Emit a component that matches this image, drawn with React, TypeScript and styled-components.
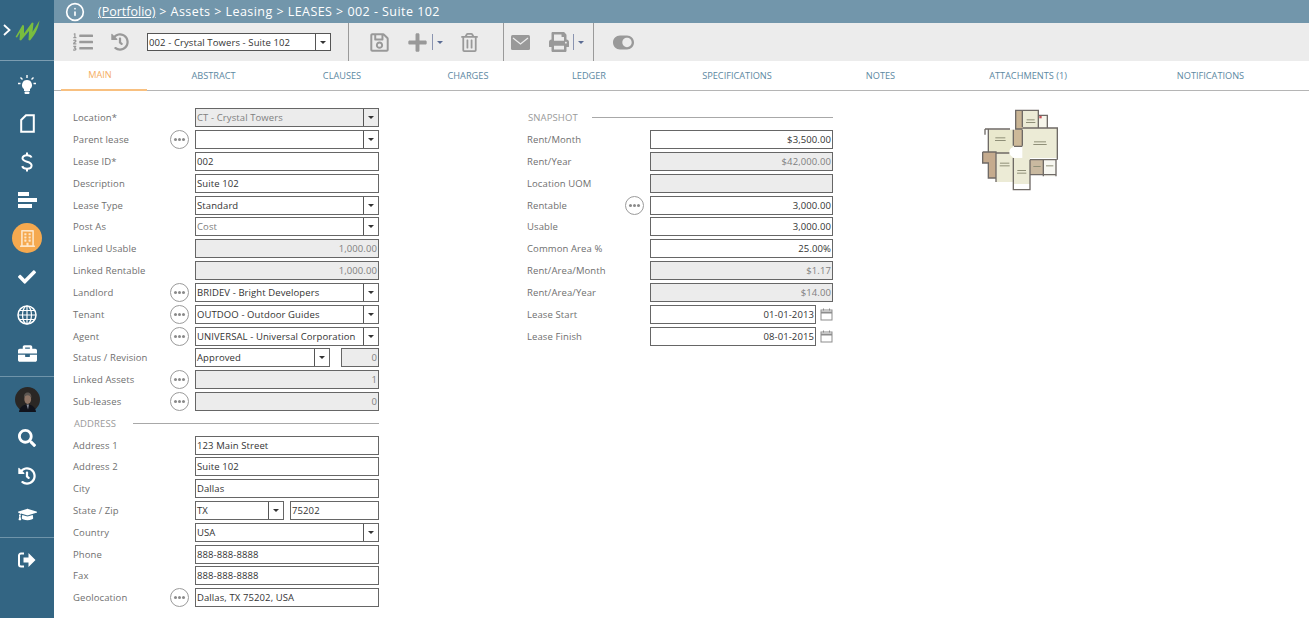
import styled, { createGlobalStyle } from 'styled-components';
import {
  FaBriefcase,
  FaCheck,
  FaGraduationCap,
  FaHistory,
  FaListOl,
  FaPlus,
  FaPrint,
  FaRegBuilding,
  FaRegSave,
  FaRegTrashAlt,
  FaSearch,
  FaToggleOn,
} from 'react-icons/fa';
import { FiInfo } from 'react-icons/fi';

const GlobalStyle = createGlobalStyle`
  html, body {
    margin: 0;
    padding: 0;
    background: #fff;
  }
  body {
    font-family: "Open Sans", "Liberation Sans", sans-serif;
    font-size: 9.5px;
    letter-spacing: 0.1px;
    overflow: hidden;
  }
`;

type FieldKind = 'text' | 'number' | 'select';

interface Field {
  label: string;
  value?: string;
  kind?: FieldKind;
  disabled?: boolean;
  muted?: boolean;
  more?: boolean;
}

const leftFields: Field[] = [
  { label: 'Location*', value: 'CT - Crystal Towers', kind: 'select', disabled: true },
  { label: 'Parent lease', value: '', kind: 'select', more: true },
  { label: 'Lease ID*', value: '002' },
  { label: 'Description', value: 'Suite 102' },
  { label: 'Lease Type', value: 'Standard', kind: 'select' },
  { label: 'Post As', value: 'Cost', kind: 'select', muted: true },
  { label: 'Linked Usable', value: '1,000.00', kind: 'number', disabled: true },
  { label: 'Linked Rentable', value: '1,000.00', kind: 'number', disabled: true },
  { label: 'Landlord', value: 'BRIDEV - Bright Developers', kind: 'select', more: true },
  { label: 'Tenant', value: 'OUTDOO - Outdoor Guides', kind: 'select', more: true },
  { label: 'Agent', value: 'UNIVERSAL - Universal Corporation', kind: 'select', more: true },
];

const assetFields: Field[] = [
  { label: 'Linked Assets', value: '1', kind: 'number', disabled: true, more: true },
  { label: 'Sub-leases', value: '0', kind: 'number', disabled: true, more: true },
];

const addressFields: Field[] = [
  { label: 'Address 1', value: '123 Main Street' },
  { label: 'Address 2', value: 'Suite 102' },
  { label: 'City', value: 'Dallas' },
];

const contactFields: Field[] = [
  { label: 'Country', value: 'USA', kind: 'select' },
  { label: 'Phone', value: '888-888-8888' },
  { label: 'Fax', value: '888-888-8888' },
  { label: 'Geolocation', value: 'Dallas, TX 75202, USA', more: true },
];

const snapshotFields: Field[] = [
  { label: 'Rent/Month', value: '$3,500.00', kind: 'number' },
  { label: 'Rent/Year', value: '$42,000.00', kind: 'number', disabled: true },
  { label: 'Location UOM', value: '', kind: 'number', disabled: true },
  { label: 'Rentable', value: '3,000.00', kind: 'number', more: true },
  { label: 'Usable', value: '3,000.00', kind: 'number' },
  { label: 'Common Area %', value: '25.00%', kind: 'number' },
  { label: 'Rent/Area/Month', value: '$1.17', kind: 'number', disabled: true },
  { label: 'Rent/Area/Year', value: '$14.00', kind: 'number', disabled: true },
];

const tabs = [
  { label: 'MAIN', width: 86 },
  { label: 'ABSTRACT', width: 133 },
  { label: 'CLAUSES', width: 124 },
  { label: 'CHARGES', width: 128 },
  { label: 'LEDGER', width: 114 },
  { label: 'SPECIFICATIONS', width: 182 },
  { label: 'NOTES', width: 105 },
  { label: 'ATTACHMENTS (1)', width: 190 },
  { label: 'NOTIFICATIONS', width: 175 },
];

const BrandChevron = () => (
  <svg width="8" height="12" viewBox="0 0 8 12" fill="none">
    <path d="M1 1l5.500 5L1 11" stroke="#fff" strokeWidth="1.800" />
  </svg>
);

const Logo = () => (
  <svg width="25" height="21" viewBox="0 0 25 21">
    <path
      d="M0.500 17 L7.500 5 L9 5.500 L9 13.500 L17 2.500 L18.500 3 L17.500 12 L24.500 0.500 C23.500 8 20 15 15 20.500 L13.500 20 L14 11 L6 20.500 L4.500 20 L5 12.500 L2 17.500 Z"
      fill="#79bd3f"
    />
  </svg>
);

const BulbIcon = () => (
  <svg width="20" height="20" viewBox="0 0 20 20" fill="#fff">
    <path d="M10 5a5 5 0 0 1 3 9v2H7v-2a5 5 0 0 1 3-9z" />
    <rect x="7.500" y="16.500" width="5" height="2.500" rx="1" />
    <path d="M10 0v3M3.500 2.500l2 2M16.500 2.500l-2 2M1 8.500h2.500M19 8.500h-2.500" stroke="#fff" strokeWidth="1.400" />
  </svg>
);

const FileIcon = () => (
  <svg width="15" height="19" viewBox="0 0 15 19" fill="none">
    <path d="M6 1.200h7.800v16.600H1.200V6z" stroke="#fff" strokeWidth="2" />
  </svg>
);

const DollarIcon = () => (
  <svg width="12" height="20" viewBox="0 0 12 20" fill="none" stroke="#fff" strokeWidth="2">
    <path d="M10.500 5.500C10 4 8.500 3.200 6 3.200 3.200 3.200 1.500 4.500 1.500 6.300 1.500 8.300 3.300 9 6 9.800c2.800.8 4.600 1.600 4.600 3.700 0 1.900-1.800 3.200-4.600 3.200-2.500 0-4.200-.9-4.800-2.600" />
    <path d="M6 0.500v2.700M6 16.800v2.700" />
  </svg>
);

const BarsIcon = () => (
  <svg width="19" height="16" viewBox="0 0 19 16" fill="#fff">
    <rect x="0" y="0" width="11" height="4" />
    <rect x="0" y="6" width="19" height="4" />
    <rect x="0" y="12" width="14" height="4" />
  </svg>
);

const GlobeIcon = () => (
  <svg width="20" height="20" viewBox="0 0 20 20" fill="none" stroke="#fff" strokeWidth="1.200">
    <circle cx="10" cy="10" r="9" strokeWidth="1.500" />
    <ellipse cx="10" cy="10" rx="4.500" ry="9" />
    <path d="M10 1v18M1 10h18M2.500 5.500h15M2.500 14.500h15" />
  </svg>
);

const ExitIcon = () => (
  <svg width="18" height="16" viewBox="0 0 18 16">
    <path d="M6 1.500H3a2 2 0 0 0-2 2v9a2 2 0 0 0 2 2h3" stroke="#fff" strokeWidth="2" fill="none" />
    <path d="M5.500 5.500h5V1l7 7-7 7v-4.500h-5z" fill="#fff" />
  </svg>
);

const EnvelopeIcon = () => (
  <svg width="19" height="15" viewBox="0 0 19 15">
    <rect width="19" height="15" rx="1.500" fill="#999" />
    <path d="M2 3l7.500 6L17 3" fill="none" stroke="#ececec" strokeWidth="1.300" />
  </svg>
);

const AvatarArt = () => (
  <svg width="25" height="25" viewBox="0 0 25 25">
    <circle cx="12.500" cy="12.500" r="12.500" fill="#2a2725" />
    <path d="M4 25c.5-5 4-7.500 8.500-7.500S20.500 20 21 25z" fill="#11131c" />
    <path d="M11.500 17.500h2.500l-1 5z" fill="#8a8f9c" />
    <ellipse cx="12.700" cy="12" rx="3.400" ry="5" fill="#8f7566" />
    <path d="M9 11c-.3-4 1.500-5.500 3.700-5.500S16.700 7 16.400 11c-.7-2-1.900-2.800-3.700-2.800S9.700 9 9 11z" fill="#5c5652" />
  </svg>
);

// coordinates follow the plan drawing, walls are drawn over the room fills
const FloorPlan = () => (
  <svg width="80" height="84" viewBox="60 40 240 252">
    <rect x="187" y="47" width="48" height="55" fill="#ecebd6" />
    <rect x="235" y="62" width="27" height="40" fill="#f6f5ea" />
    <rect x="167" y="47" width="20" height="58" fill="#c9b494" />
    <rect x="85" y="105" width="75" height="70" fill="#e9e8cd" />
    <rect x="162" y="105" width="25" height="50" fill="#cdb999" />
    <rect x="187" y="100" width="105" height="90" fill="#ecebd6" />
    <rect x="68" y="172" width="40" height="33" fill="#c5ab8e" />
    <rect x="85" y="205" width="23" height="45" fill="#c5ab8e" />
    <rect x="108" y="175" width="52" height="87" fill="#ecebd6" />
    <rect x="160" y="190" width="50" height="78" fill="#ecebd6" />
    <rect x="210" y="195" width="40" height="45" fill="#c9b9a0" />
    <rect x="250" y="195" width="38" height="50" fill="#f7f7f1" />
    <circle cx="164" cy="172" r="16" fill="#fff" />
    <rect x="238" y="64" width="7" height="7" fill="#c9505a" />
    <path
      d="M167 105V47h68v15h27v38M187 47v50M235 62v38M75 103h75M168 103h19M187 100h105v95M75 103v17M85 105v67M68 172h40v90M68 172v33h17v45h23M160 105v48M187 105v48M162 155h25M108 175h40M160 190v95h50v-90M210 195h78v50M250 195v50M210 240h78"
      fill="none"
      stroke="#6f6a66"
      strokeWidth="4"
    />
    <g fill="#8f8f78">
      <rect x="200" y="74" width="24" height="3" />
      <rect x="198" y="82" width="28" height="3" />
      <rect x="106" y="128" width="30" height="3" />
      <rect x="105" y="136" width="32" height="3" />
      <rect x="222" y="140" width="36" height="3" />
      <rect x="220" y="148" width="40" height="3" />
      <rect x="120" y="204" width="28" height="3" />
      <rect x="119" y="212" width="30" height="3" />
      <rect x="172" y="226" width="26" height="3" />
      <rect x="171" y="234" width="28" height="3" />
      <rect x="220" y="214" width="22" height="3" />
      <rect x="258" y="212" width="22" height="3" />
    </g>
  </svg>
);

const CalendarIcon = () => (
  <svg width="13" height="13" viewBox="0 0 13 13" fill="none" stroke="#8d8d8d">
    <rect x="1" y="2" width="11" height="10" />
    <path d="M1 4.500h11" strokeWidth="2" />
    <path d="M3.500 0.500v2M9.500 0.500v2" />
  </svg>
);

const Row = ({ field }: { field: Field }) => (
  <FormRow>
    <Label>{field.label}</Label>
    {field.more ? <MoreButton aria-label="More" /> : <span />}
    <Control field={field} />
  </FormRow>
);

const Control = ({ field }: { field: Field }) => (
  <Box $disabled={field.disabled} $muted={field.muted}>
    <BoxValue $align={field.kind === 'number' ? 'right' : 'left'}>{field.value}</BoxValue>
    {field.kind === 'select' && <Caret />}
  </Box>
);

const App = () => {
  return (
    <Page>
      <GlobalStyle />
      <Sidebar>
        <Brand>
          <BrandChevron />
          <Logo />
        </Brand>
        <SideGroup $top={5} $bottom={4}>
          <SideItem><BulbIcon /></SideItem>
          <SideItem><FileIcon /></SideItem>
          <SideItem><DollarIcon /></SideItem>
          <SideItem><BarsIcon /></SideItem>
          <SideItem>
            <ActiveDot><FaRegBuilding size={17} /></ActiveDot>
          </SideItem>
          <SideItem><FaCheck size={18} /></SideItem>
          <SideItem><GlobeIcon /></SideItem>
          <SideItem><FaBriefcase size={19} /></SideItem>
        </SideGroup>
        <SideGroup $top={3} $bottom={3}>
          <SideItem><AvatarArt /></SideItem>
          <SideItem><FaSearch size={18} /></SideItem>
          <SideItem><FaHistory size={18} /></SideItem>
          <SideItem><FaGraduationCap size={19} /></SideItem>
        </SideGroup>
        <SideGroup $top={3} $bottom={0} $last>
          <SideItem><ExitIcon /></SideItem>
        </SideGroup>
      </Sidebar>

      <Main>
        <TitleBar>
          <FiInfo size={20} strokeWidth={2} />
          <Crumbs>
            <u>(Portfolio)</u> &gt; Assets &gt; Leasing &gt; LEASES &gt; 002 - Suite 102
          </Crumbs>
        </TitleBar>

        <Toolbar>
          <ToolSection $width={295} $pad={19} $gap={18}>
            <ToolIcon><FaListOl size={20} /></ToolIcon>
            <ToolIcon><FaHistory size={18} /></ToolIcon>
            <RecordPicker>
              <BoxValue $align="left">002 - Crystal Towers - Suite 102</BoxValue>
              <Caret />
            </RecordPicker>
          </ToolSection>
          <ToolSection $width={155} $pad={20} $gap={17}>
            <ToolIcon><FaRegSave size={21} /></ToolIcon>
            <ToolIcon>
              <FaPlus size={21} />
              <MenuCaret />
            </ToolIcon>
            <ToolIcon><FaRegTrashAlt size={19} /></ToolIcon>
          </ToolSection>
          <ToolSection $width={90} $pad={7} $gap={19}>
            <ToolIcon><EnvelopeIcon /></ToolIcon>
            <ToolIcon>
              <FaPrint size={20} />
              <MenuCaret />
            </ToolIcon>
          </ToolSection>
          <ToolSection $width={60} $pad={19} $gap={0} $last>
            <ToolIcon><FaToggleOn size={21} /></ToolIcon>
          </ToolSection>
        </Toolbar>

        <TabBar>
          {tabs.map((tab, i) => (
            <Tab key={tab.label} $width={tab.width} $active={i === 0}>
              {tab.label}
            </Tab>
          ))}
        </TabBar>

        <Content>
          <Column $labelWidth={97}>
            {leftFields.map((f) => <Row key={f.label} field={f} />)}
            <FormRow>
              <Label>Status / Revision</Label>
              <span />
              <SplitControls $columns="135px 38px" $gap={11}>
                <Control field={{ label: 'Status', value: 'Approved', kind: 'select' }} />
                <Control field={{ label: 'Revision', value: '0', kind: 'number', disabled: true }} />
              </SplitControls>
            </FormRow>
            {assetFields.map((f) => <Row key={f.label} field={f} />)}
            <SectionHead $labelWidth={59}>ADDRESS</SectionHead>
            {addressFields.map((f) => <Row key={f.label} field={f} />)}
            <FormRow>
              <Label>State / Zip</Label>
              <span />
              <SplitControls $columns="89px 89px" $gap={6}>
                <Control field={{ label: 'State', value: 'TX', kind: 'select' }} />
                <Control field={{ label: 'Zip', value: '75202' }} />
              </SplitControls>
            </FormRow>
            {contactFields.map((f) => <Row key={f.label} field={f} />)}
          </Column>

          <Column $labelWidth={98}>
            <SectionHead $labelWidth={64}>SNAPSHOT</SectionHead>
            {snapshotFields.map((f) => <Row key={f.label} field={f} />)}
            {[
              ['Lease Start', '01-01-2013'],
              ['Lease Finish', '08-01-2015'],
            ].map(([label, value]) => (
              <FormRow key={label}>
                <Label>{label}</Label>
                <span />
                <DateControl>
                  <Control field={{ label, value, kind: 'number' }} />
                  <CalendarIcon />
                </DateControl>
              </FormRow>
            ))}
          </Column>

          <PlanPane>
            <FloorPlan />
          </PlanPane>
        </Content>
      </Main>
    </Page>
  );
};

const Page = styled.div`
  display: flex;
  width: 1309px;
  height: 618px;
  overflow: hidden;
  color: #444;
`;

const Sidebar = styled.nav`
  flex: 0 0 54px;
  background: #336583;
  color: #fff;
`;

const Brand = styled.div`
  height: 61px;
  box-sizing: border-box;
  padding: 0 0 0 3px;
  display: flex;
  align-items: center;
  gap: 4px;
  border-bottom: 1px solid #7c9db1;
`;

const SideGroup = styled.div<{ $top: number; $bottom: number; $last?: boolean }>`
  padding: ${(p) => p.$top}px 0 ${(p) => p.$bottom}px;
  border-bottom: ${(p) => (p.$last ? '0' : '1px solid #6f94aa')};
`;

const SideItem = styled.div`
  height: 38.300px;
  display: flex;
  align-items: center;
  justify-content: center;
`;

const ActiveDot = styled.div`
  width: 30px;
  height: 30px;
  border-radius: 50%;
  background: #f5a94f;
  color: #fde6c8;
  display: flex;
  align-items: center;
  justify-content: center;
`;

const Main = styled.main`
  flex: 1;
  min-width: 0;
`;

const TitleBar = styled.header`
  height: 23px;
  background: #7296ab;
  color: #fff;
  display: flex;
  align-items: center;
  padding-left: 11px;
  gap: 13px;
`;

const Crumbs = styled.div`
  font-size: 12.500px;
  letter-spacing: 0.45px;
  white-space: nowrap;

  u {
    letter-spacing: 0;
  }
`;

const Toolbar = styled.div`
  height: 38px;
  background: #ececec;
  display: flex;
`;

const ToolSection = styled.div<{ $width: number; $pad: number; $gap: number; $last?: boolean }>`
  width: ${(p) => p.$width}px;
  box-sizing: border-box;
  flex: none;
  display: flex;
  align-items: center;
  gap: ${(p) => p.$gap}px;
  padding-left: ${(p) => p.$pad}px;
  border-right: ${(p) => (p.$last ? '0' : '1px solid #9a9a9a')};
`;

const ToolIcon = styled.div`
  color: #999;
  display: flex;
  align-items: center;
  gap: 4px;
`;

const MenuCaret = styled.span`
  height: 16px;
  padding-left: 4px;
  border-left: 1px solid #8a94b0;
  display: flex;
  align-items: center;

  &::after {
    content: '';
    border: 3px solid transparent;
    border-top: 3.500px solid #5b6c94;
    border-bottom: 0;
  }
`;

const RecordPicker = styled.div`
  width: 184px;
  height: 18px;
  box-sizing: border-box;
  background: #fff;
  border: 1px solid #555;
  display: flex;
  align-items: center;
  color: #333;
`;

const TabBar = styled.div`
  height: 30px;
  box-sizing: border-box;
  padding-left: 7px;
  display: flex;
  border-bottom: 1px solid #b5b5b5;
`;

const Tab = styled.div<{ $width: number; $active?: boolean }>`
  width: ${(p) => p.$width}px;
  box-sizing: border-box;
  flex: none;
  display: flex;
  align-items: center;
  justify-content: center;
  height: 30px;
  padding-right: ${(p) => (p.$active ? '8px' : '0')};
  padding-bottom: 2px;
  font-size: 9.200px;
  letter-spacing: 0;
  color: ${(p) => (p.$active ? '#f5ad62' : '#5c88a2')};
  border-bottom: ${(p) => (p.$active ? '2px solid #f8c080' : '0')};
`;

const Content = styled.div`
  display: grid;
  grid-template-columns: 306px 148px 306px 147px 80px;
  padding: 16px 0 0 19px;
`;

const Column = styled.section<{ $labelWidth: number }>`
  --label-width: ${(p) => p.$labelWidth}px;
  display: flex;
  flex-direction: column;

  &:nth-child(2) {
    grid-column: 3;
  }
`;

const FormRow = styled.div`
  height: 21.820px;
  flex: none;
  display: grid;
  grid-template-columns: var(--label-width) 25px 1fr;
  align-items: center;
`;

const Label = styled.label`
  color: #6f6f6f;
  white-space: nowrap;
`;

const MoreButton = styled.button`
  position: relative;
  width: 19px;
  height: 19px;
  padding: 0;
  border: 1px solid #9b9b9b;
  border-radius: 50%;
  background: #fff;

  &::before {
    content: '';
    position: absolute;
    left: 7px;
    top: 7px;
    width: 3px;
    height: 3px;
    border-radius: 50%;
    background: #8a8a8a;
    box-shadow: -4px 0 #8a8a8a, 4px 0 #8a8a8a;
  }
`;

const Box = styled.div<{ $disabled?: boolean; $muted?: boolean }>`
  height: 19px;
  min-width: 0;
  box-sizing: border-box;
  display: flex;
  align-items: center;
  border: 1px solid #666;
  background: ${(p) => (p.$disabled ? '#ececec' : '#fff')};
  color: ${(p) => (p.$disabled || p.$muted ? '#808080' : '#333')};
`;

const BoxValue = styled.span<{ $align: 'left' | 'right' }>`
  flex: 1;
  min-width: 0;
  padding: 0 1px;
  white-space: nowrap;
  overflow: hidden;
  text-align: ${(p) => p.$align};
`;

const Caret = styled.span`
  flex: 0 0 14px;
  align-self: stretch;
  border-left: 1px solid #555;
  display: flex;
  align-items: center;
  justify-content: center;

  &::after {
    content: '';
    border: 3px solid transparent;
    border-top: 3.500px solid #333;
    border-bottom: 0;
  }
`;

const SplitControls = styled.div<{ $columns: string; $gap: number }>`
  display: grid;
  grid-template-columns: ${(p) => p.$columns};
  gap: ${(p) => p.$gap}px;
`;

const DateControl = styled.div`
  display: grid;
  grid-template-columns: 166px 1fr;
  align-items: center;
  gap: 4px;
`;

const SectionHead = styled.h3<{ $labelWidth: number }>`
  height: 21.820px;
  flex: none;
  margin: 0;
  padding-left: 1px;
  display: grid;
  grid-template-columns: ${(p) => p.$labelWidth}px 1fr;
  align-items: center;
  font-size: 9.500px;
  font-weight: 400;
  color: #9a9a9a;

  &::after {
    content: '';
    height: 1px;
    background: #a8a8a8;
  }
`;

const PlanPane = styled.aside`
  grid-column: 5;
  padding-top: 1px;
`;

export default App;
